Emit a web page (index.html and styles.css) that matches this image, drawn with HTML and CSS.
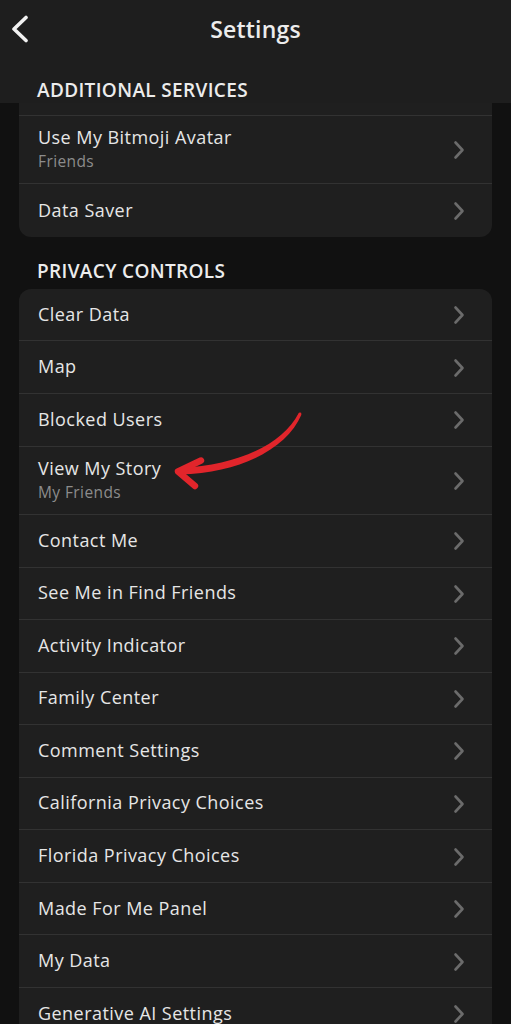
FILE: index.html
```html
<!DOCTYPE html>
<html lang="en">
<head>
<meta charset="utf-8">
<title>Settings</title>
<link rel="stylesheet" href="styles.css">
</head>
<body>
<header class="header">
  <div class="topbar">
    <svg class="back" width="20" height="28" viewBox="0 0 20 28"><polyline points="15,2.5 3,14 15,25.5" fill="none" stroke="#f2f2f2" stroke-width="3.6" stroke-linecap="round" stroke-linejoin="round"/></svg>
    <h1 class="title">Settings</h1>
  </div>
  <div class="section-label first">ADDITIONAL SERVICES</div>
</header>

<main>
  <div class="card card-cut">
    <div class="stub"></div>
    <div class="row two">
      <div class="texts"><span class="name">Use My Bitmoji Avatar</span><span class="sub">Friends</span></div>
      <svg class="chev" width="12" height="20" viewBox="0 0 12 20"><polyline points="2.5,2.5 9.5,10 2.5,17.5" fill="none" stroke="#6b6b6b" stroke-width="2.6" stroke-linecap="round" stroke-linejoin="round"/></svg>
    </div>
    <div class="row">
      <div class="texts"><span class="name">Data Saver</span></div>
      <svg class="chev" width="12" height="20" viewBox="0 0 12 20"><polyline points="2.5,2.5 9.5,10 2.5,17.5" fill="none" stroke="#6b6b6b" stroke-width="2.6" stroke-linecap="round" stroke-linejoin="round"/></svg>
    </div>
  </div>

  <div class="section-label">PRIVACY CONTROLS</div>

  <div class="card privacy">
    <div class="row"><div class="texts"><span class="name">Clear Data</span></div><svg class="chev" width="12" height="20" viewBox="0 0 12 20"><polyline points="2.5,2.5 9.5,10 2.5,17.5" fill="none" stroke="#6b6b6b" stroke-width="2.6" stroke-linecap="round" stroke-linejoin="round"/></svg></div>
    <div class="row"><div class="texts"><span class="name">Map</span></div><svg class="chev" width="12" height="20" viewBox="0 0 12 20"><polyline points="2.5,2.5 9.5,10 2.5,17.5" fill="none" stroke="#6b6b6b" stroke-width="2.6" stroke-linecap="round" stroke-linejoin="round"/></svg></div>
    <div class="row"><div class="texts"><span class="name">Blocked Users</span></div><svg class="chev" width="12" height="20" viewBox="0 0 12 20"><polyline points="2.5,2.5 9.5,10 2.5,17.5" fill="none" stroke="#6b6b6b" stroke-width="2.6" stroke-linecap="round" stroke-linejoin="round"/></svg></div>
    <div class="row two"><div class="texts"><span class="name">View My Story</span><span class="sub">My Friends</span></div><svg class="chev" width="12" height="20" viewBox="0 0 12 20"><polyline points="2.5,2.5 9.5,10 2.5,17.5" fill="none" stroke="#6b6b6b" stroke-width="2.6" stroke-linecap="round" stroke-linejoin="round"/></svg></div>
    <div class="row"><div class="texts"><span class="name">Contact Me</span></div><svg class="chev" width="12" height="20" viewBox="0 0 12 20"><polyline points="2.5,2.5 9.5,10 2.5,17.5" fill="none" stroke="#6b6b6b" stroke-width="2.6" stroke-linecap="round" stroke-linejoin="round"/></svg></div>
    <div class="row"><div class="texts"><span class="name">See Me in Find Friends</span></div><svg class="chev" width="12" height="20" viewBox="0 0 12 20"><polyline points="2.5,2.5 9.5,10 2.5,17.5" fill="none" stroke="#6b6b6b" stroke-width="2.6" stroke-linecap="round" stroke-linejoin="round"/></svg></div>
    <div class="row"><div class="texts"><span class="name">Activity Indicator</span></div><svg class="chev" width="12" height="20" viewBox="0 0 12 20"><polyline points="2.5,2.5 9.5,10 2.5,17.5" fill="none" stroke="#6b6b6b" stroke-width="2.6" stroke-linecap="round" stroke-linejoin="round"/></svg></div>
    <div class="row"><div class="texts"><span class="name">Family Center</span></div><svg class="chev" width="12" height="20" viewBox="0 0 12 20"><polyline points="2.5,2.5 9.5,10 2.5,17.5" fill="none" stroke="#6b6b6b" stroke-width="2.6" stroke-linecap="round" stroke-linejoin="round"/></svg></div>
    <div class="row"><div class="texts"><span class="name">Comment Settings</span></div><svg class="chev" width="12" height="20" viewBox="0 0 12 20"><polyline points="2.5,2.5 9.5,10 2.5,17.5" fill="none" stroke="#6b6b6b" stroke-width="2.6" stroke-linecap="round" stroke-linejoin="round"/></svg></div>
    <div class="row"><div class="texts"><span class="name">California Privacy Choices</span></div><svg class="chev" width="12" height="20" viewBox="0 0 12 20"><polyline points="2.5,2.5 9.5,10 2.5,17.5" fill="none" stroke="#6b6b6b" stroke-width="2.6" stroke-linecap="round" stroke-linejoin="round"/></svg></div>
    <div class="row"><div class="texts"><span class="name">Florida Privacy Choices</span></div><svg class="chev" width="12" height="20" viewBox="0 0 12 20"><polyline points="2.5,2.5 9.5,10 2.5,17.5" fill="none" stroke="#6b6b6b" stroke-width="2.6" stroke-linecap="round" stroke-linejoin="round"/></svg></div>
    <div class="row"><div class="texts"><span class="name">Made For Me Panel</span></div><svg class="chev" width="12" height="20" viewBox="0 0 12 20"><polyline points="2.5,2.5 9.5,10 2.5,17.5" fill="none" stroke="#6b6b6b" stroke-width="2.6" stroke-linecap="round" stroke-linejoin="round"/></svg></div>
    <div class="row"><div class="texts"><span class="name">My Data</span></div><svg class="chev" width="12" height="20" viewBox="0 0 12 20"><polyline points="2.5,2.5 9.5,10 2.5,17.5" fill="none" stroke="#6b6b6b" stroke-width="2.6" stroke-linecap="round" stroke-linejoin="round"/></svg></div>
    <div class="row"><div class="texts"><span class="name">Generative AI Settings</span></div><svg class="chev" width="12" height="20" viewBox="0 0 12 20"><polyline points="2.5,2.5 9.5,10 2.5,17.5" fill="none" stroke="#6b6b6b" stroke-width="2.6" stroke-linecap="round" stroke-linejoin="round"/></svg></div>

    <svg class="arrow" width="140" height="88" viewBox="169 405 140 88">
      <path d="M301.4 413.8 C287 447.5 241 472 180 473.5 L180 467 C239 464.5 283 442.5 298.6 412.2 Z" fill="#e1252b"/>
      <circle cx="300" cy="413" r="1.4" fill="#e1252b"/>
      <polyline points="201,459.5 178,470.5 195,485" fill="none" stroke="#e1252b" stroke-width="6.4" stroke-linecap="round" stroke-linejoin="round"/>
    </svg>
  </div>
</main>
</body>
</html>
```

FILE: styles.css
```css
* { box-sizing: border-box; }

html, body {
  margin: 0;
  padding: 0;
  background: #111111;
  font-family: "Open Sans", Lato, "Noto Sans", "Liberation Sans", sans-serif;
  color: #e8e8e8;
  overflow: hidden;
  height: 1024px;
}

.header {
  background: #1e1e1e;
  height: 103px;
}

.topbar {
  height: 58px;
  display: flex;
  align-items: center;
  justify-content: center;
  position: relative;
}

.back {
  position: absolute;
  left: 11px;
  top: 15px;
}

.title {
  margin: 0;
  font-size: 23px;
  line-height: 28px;
  font-weight: 600;
  color: #ececec;
  padding-bottom: 1px;
  letter-spacing: 0.2px;
}

.section-label {
  font-size: 19px;
  line-height: 22px;
  font-weight: 600;
  color: #ececec;
  padding: 23px 0 7px 37px;
  letter-spacing: 0.35px;
}

.section-label.first {
  padding: 21px 0 0 37px;
}

.card {
  background: #1f1f1f;
  margin: 0 19px;
  border-radius: 12px;
  overflow: hidden;
}

.card-cut {
  border-top-left-radius: 0;
  border-top-right-radius: 0;
}

.privacy {
  position: relative;
  overflow: visible;
}

.stub {
  height: 13px;
  border-bottom: 1px solid #323232;
}

.row {
  height: 52.56px;
  display: flex;
  align-items: center;
  justify-content: space-between;
  padding: 0 27px 0 19px;
  border-bottom: 1px solid #323232;
}

.row:last-child,
.card-cut .row:last-child {
  border-bottom: none;
}

.row.two {
  height: 68.4px;
}

.texts {
  display: flex;
  flex-direction: column;
  padding-bottom: 2px;
}

.name {
  font-size: 18px;
  line-height: 22px;
  font-weight: 500;
  color: #e6e6e6;
  letter-spacing: 0.45px;
}

.sub {
  font-size: 15.5px;
  line-height: 20px;
  font-weight: 500;
  color: #8c8c8c;
  margin-top: 3px;
  letter-spacing: 0.4px;
}

.chev {
  flex: none;
  margin-top: 1px;
}

.arrow {
  position: absolute;
  left: 150px;
  top: 117px;
}
```
